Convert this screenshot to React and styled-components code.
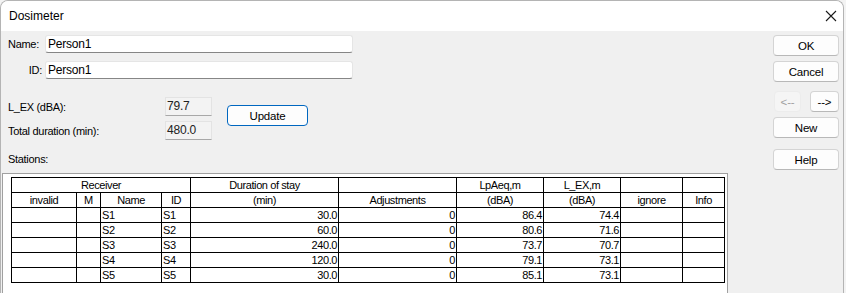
import styled, { createGlobalStyle } from 'styled-components'

const GlobalStyle = createGlobalStyle`
  html, body {
    margin: 0;
    padding: 0;
    background: #f3f3f3;
    overflow: hidden;
  }
  body {
    font-family: "Liberation Sans", Arial, sans-serif;
    color: #000;
  }
`

const Window = styled.div`
  width: 844px;
  height: 293px;
  box-sizing: border-box;
  border: 1px solid #b4b4b4;
  border-bottom: none;
  border-radius: 8px 8px 0 0;
  background: #f0f0f0;
  overflow: hidden;
  display: flex;
  flex-direction: column;
`

const TitleBar = styled.div`
  height: 30px;
  flex-shrink: 0;
  background: #fff;
  display: flex;
  align-items: center;
  justify-content: space-between;
  padding: 0 6px 0 8px;
  font-size: 12px;
`

const Body = styled.div`
  flex: 1;
  display: flex;
  min-height: 0;
`

const Main = styled.div`
  display: flex;
  flex-direction: column;
  padding-left: 1px;
`

const Section = styled.div`
  padding-left: 6px;
  font-size: 11px;
  letter-spacing: -0.3px;
`

const FieldRow = styled.div`
  display: grid;
  grid-template-columns: 34px 308px;
  column-gap: 3px;
  align-items: center;
  margin-top: ${(p) => p.$top}px;
`

const Label = styled.label`
  text-align: ${(p) => (p.$right ? 'right' : 'left')};
`

const TextBox = styled.div`
  height: 18px;
  box-sizing: border-box;
  background: #fff;
  border: 1px solid #e5e5e5;
  border-bottom-color: #868686;
  border-radius: 3px;
  padding-left: 2px;
  font-size: 12px;
  letter-spacing: -0.2px;
  line-height: 16px;
`

const ValueBlock = styled.div`
  display: flex;
  align-items: flex-start;
  margin-top: 18px;
`

const ValueGrid = styled.div`
  display: grid;
  grid-template-columns: 157px 47px;
  grid-auto-rows: 19px;
  row-gap: 5px;
  align-items: center;
`

const ValueBox = styled.div`
  height: 19px;
  box-sizing: border-box;
  background: #f3f3f3;
  border: 1px solid #e3e3e3;
  border-bottom-color: #a8a8a8;
  padding-left: 1px;
  font-size: 12px;
  letter-spacing: -0.2px;
  line-height: 17px;
  color: #222;
`

const Button = styled.button`
  box-sizing: border-box;
  width: ${(p) => p.$w || 66}px;
  height: 21px;
  margin: ${(p) => p.$m || '0'};
  padding: 0;
  font-family: "Liberation Sans", Arial, sans-serif;
  font-size: 11.5px;
  letter-spacing: -0.2px;
  color: ${(p) => (p.disabled ? '#a0a0a0' : '#000')};
  background: ${(p) => (p.disabled ? '#f5f5f5' : '#fdfdfd')};
  border: 1px solid ${(p) => (p.$primary ? '#0067c0' : p.disabled ? '#ececec' : '#d4d4d4')};
  border-bottom-color: ${(p) => (p.$primary ? '#0067c0' : p.disabled ? '#ececec' : '#b8b8b8')};
  border-radius: 4px;
`

const StationsLabel = styled.div`
  margin-top: 12px;
  height: 15px;
  line-height: 15px;
`

const Panel = styled.div`
  margin-top: 6px;
  width: 726px;
  flex: 1;
  box-sizing: border-box;
  border: 1px solid #a0a0a0;
  border-bottom: none;
  background: #fff;
  padding: 3px 0 0 8px;
`

const Grid = styled.table`
  border-collapse: collapse;
  table-layout: fixed;
  width: 713px;
  font-size: 11px;
  letter-spacing: -0.4px;
  color: #000;

  & td {
    border: 1px solid #000;
    height: 15px;
    padding: 0 1px;
    line-height: 13px;
    white-space: nowrap;
    overflow: hidden;
    box-sizing: border-box;
  }
`

const Cell = styled.td`
  text-align: ${(p) => p.$align || 'center'};
`

const Side = styled.div`
  margin-left: auto;
  margin-right: 4px;
  width: 66px;
  padding-top: 4px;
  display: flex;
  flex-direction: column;
`

const ArrowRow = styled.div`
  display: flex;
  justify-content: space-between;
  margin-top: 9px;
`

const cols = [65, 24, 61, 29, 148, 118, 87, 77, 62, 42]

const rows = [
  ['S1', 'S1', '30.0', '0', '86.4', '74.4'],
  ['S2', 'S2', '60.0', '0', '80.6', '71.6'],
  ['S3', 'S3', '240.0', '0', '73.7', '70.7'],
  ['S4', 'S4', '120.0', '0', '79.1', '73.1'],
  ['S5', 'S5', '30.0', '0', '85.1', '73.1'],
]

const CloseIcon = () => (
  <svg width="12" height="12" viewBox="0 0 12 12">
    <path d="M1 1L11 11M11 1L1 11" stroke="#1a1a1a" strokeWidth="1.1" fill="none" />
  </svg>
)

export default function App() {
  return (
    <>
      <GlobalStyle />
      <Window>
        <TitleBar>
          <span>Dosimeter</span>
          <CloseIcon />
        </TitleBar>
        <Body>
          <Main>
            <Section>
              <FieldRow $top={4}>
                <Label>Name:</Label>
                <TextBox>Person1</TextBox>
              </FieldRow>
              <FieldRow $top={8}>
                <Label $right>ID:</Label>
                <TextBox>Person1</TextBox>
              </FieldRow>
              <ValueBlock>
                <ValueGrid>
                  <Label>L_EX (dBA):</Label>
                  <ValueBox>79.7</ValueBox>
                  <Label>Total duration (min):</Label>
                  <ValueBox>480.0</ValueBox>
                </ValueGrid>
                <Button $primary $w={81} $m="8px 0 0 15px">Update</Button>
              </ValueBlock>
              <StationsLabel>Stations:</StationsLabel>
            </Section>
            <Panel>
              <Grid>
                <colgroup>
                  {cols.map((w, i) => (
                    <col key={i} style={{ width: w }} />
                  ))}
                </colgroup>
                <tbody>
                  <tr>
                    <Cell colSpan={4}>Receiver</Cell>
                    <Cell>Duration of stay</Cell>
                    <Cell />
                    <Cell>LpAeq,m</Cell>
                    <Cell>L_EX,m</Cell>
                    <Cell />
                    <Cell />
                  </tr>
                  <tr>
                    <Cell>invalid</Cell>
                    <Cell>M</Cell>
                    <Cell>Name</Cell>
                    <Cell>ID</Cell>
                    <Cell>(min)</Cell>
                    <Cell>Adjustments</Cell>
                    <Cell>(dBA)</Cell>
                    <Cell>(dBA)</Cell>
                    <Cell>ignore</Cell>
                    <Cell>Info</Cell>
                  </tr>
                  {rows.map((r) => (
                    <tr key={r[0]}>
                      <Cell />
                      <Cell />
                      <Cell $align="left">{r[0]}</Cell>
                      <Cell $align="left">{r[1]}</Cell>
                      <Cell $align="right">{r[2]}</Cell>
                      <Cell $align="right">{r[3]}</Cell>
                      <Cell $align="right">{r[4]}</Cell>
                      <Cell $align="right">{r[5]}</Cell>
                      <Cell />
                      <Cell />
                    </tr>
                  ))}
                </tbody>
              </Grid>
            </Panel>
          </Main>
          <Side>
            <Button>OK</Button>
            <Button $m="5px 0 0 0">Cancel</Button>
            <ArrowRow>
              <Button disabled $w={27} $m="0 0 0 1px">&lt;--</Button>
              <Button $w={29}>--&gt;</Button>
            </ArrowRow>
            <Button $m="5px 0 0 0">New</Button>
            <Button $m="11px 0 0 0">Help</Button>
          </Side>
        </Body>
      </Window>
    </>
  )
}
